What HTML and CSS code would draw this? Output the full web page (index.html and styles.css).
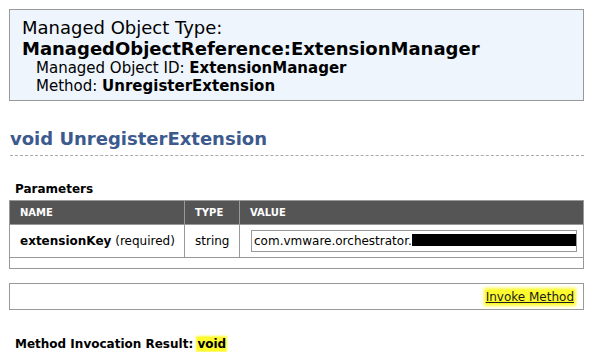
FILE: index.html
```html
<!DOCTYPE html>
<html lang="en">
<head>
    <meta charset="UTF-8">
    <title>UnregisterExtension</title>
    <link rel="stylesheet" href="styles.css">
</head>
<body>
    <div class="object-box">
        <div class="object-type">Managed Object Type:</div>
        <div class="object-ref">ManagedObjectReference:ExtensionManager</div>
        <div class="object-info">Managed Object ID: <b>ExtensionManager</b></div>
        <div class="object-info">Method: <b>UnregisterExtension</b></div>
    </div>

    <h2 class="method-title">void UnregisterExtension</h2>

    <div class="params-label">Parameters</div>
    <table class="params">
        <colgroup>
            <col class="col-name">
            <col class="col-type">
            <col>
        </colgroup>
        <tr>
            <th>NAME</th>
            <th>TYPE</th>
            <th>VALUE</th>
        </tr>
        <tr>
            <td><b>extensionKey</b> (required)</td>
            <td class="type-cell">string</td>
            <td class="value-cell">
                <div class="value-input">com.vmware.orchestrator.<span class="redacted"></span></div>
            </td>
        </tr>
        <tr class="empty-row">
            <td colspan="3"></td>
        </tr>
    </table>

    <div class="invoke-box">
        <a href="#" class="invoke-link">Invoke Method</a>
    </div>

    <div class="result">Method Invocation Result: <span class="mark">void</span></div>
</body>
</html>
```

FILE: styles.css
```css
body {
    font-family: "DejaVu Sans", Verdana, sans-serif;
    margin: 0;
    padding: 9px 15px 0 9px;
    color: #000;
    background: #fff;
}

.object-box {
    background: #eef5fd;
    border: 1px solid #999;
    padding: 8px 12px 4px 12px;
    height: 78px;
}

.object-type {
    font-size: 18px;
    line-height: 20px;
}

.object-ref {
    font-size: 18px;
    font-weight: bold;
    line-height: 21px;
}

.object-info {
    font-size: 15px;
    line-height: 18px;
    padding-left: 14px;
}

.method-title {
    font-size: 18px;
    color: #3c5a8e;
    margin: 27px 0 0 1px;
    padding-bottom: 5px;
    border-bottom: 1px dashed #aaa;
    line-height: 22px;
}

.params-label {
    font-size: 12px;
    font-weight: bold;
    margin: 25px 0 3px 6px;
    line-height: 16px;
}

.params {
    width: 100%;
    table-layout: fixed;
    border-collapse: collapse;
    border: 1px solid #999;
    font-size: 12px;
}

.params .col-name {
    width: 175px;
}

.params .col-type {
    width: 55px;
}

.params th {
    background: #555;
    color: #fff;
    font-size: 10px;
    text-align: left;
    height: 23px;
    padding: 0 10px;
    border-right: 1px solid #999;
}

.params td {
    height: 32px;
    padding: 0 10px;
    border: 1px solid #999;
    white-space: nowrap;
}

.params .type-cell {
    text-align: center;
}

.params .value-cell {
    padding: 0 6px 0 11px;
}

.params .empty-row td {
    height: 10px;
    padding: 0;
}

.value-input {
    border: 1px solid #999;
    height: 20px;
    line-height: 20px;
    padding: 0 2px;
    white-space: nowrap;
    overflow: hidden;
    font-size: 12px;
}

.redacted {
    display: inline-block;
    width: 166px;
    height: 12px;
    background: #000;
    vertical-align: -1px;
}

.invoke-box {
    border: 1px solid #999;
    margin-top: 14px;
    height: 25px;
    text-align: right;
    padding-right: 9px;
}

.invoke-link {
    font-size: 12px;
    line-height: 26px;
    color: #1a1a1a;
    text-decoration: underline;
    background: #fdfa2e;
    box-shadow: 0 0 3px 2px #fdfa2e;
}

.result {
    font-size: 12px;
    font-weight: bold;
    line-height: 16px;
    margin: 26px 0 0 6px;
}

.mark {
    background: #fdfa2e;
    box-shadow: 0 0 2px 1px #fdfa2e;
}
```
